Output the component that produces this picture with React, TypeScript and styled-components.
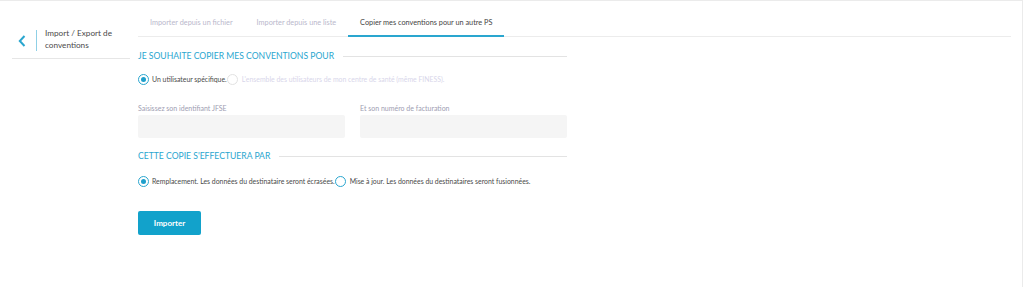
import { FC } from 'react'
import styled, { createGlobalStyle } from 'styled-components'

const GlobalStyle = createGlobalStyle`
  html, body {
    margin: 0;
    padding: 0;
    background: #fff;
  }
  body {
    font-family: Lato, 'Open Sans', sans-serif;
    color: #555;
  }
`

const Page = styled.div`
  display: flex;
  height: 286px;
  width: 1022px;
  border-top: 1px solid #ebebeb;
  border-right: 1px solid #ebebeb;
`

const Sidebar = styled.aside`
  width: 118px;
  margin-left: 12px;
  flex-shrink: 0;
`

const SideHeader = styled.div`
  display: flex;
  align-items: center;
  box-sizing: border-box;
  height: 58px;
  padding-top: 19px;
  border-bottom: 1px solid #e6e6e6;
`

const Back = styled.div`
  width: 20px;
  display: flex;
  justify-content: center;
  padding-top: 3px;
`

const VLine = styled.div`
  width: 1px;
  height: 21px;
  background: #8fd0e6;
  margin: 2px 8px 0 4px;
`

const SideTitle = styled.div`
  font-size: 8.2px;
  line-height: 12px;
  color: #4a4a4a;
`

const Main = styled.main`
  flex: 1;
  padding: 0 11px 0 8px;
`

const Tabs = styled.nav`
  display: flex;
  height: 35px;
  border-bottom: 1px solid #ececec;
`

const Tab = styled.div<{ $active?: boolean }>`
  padding: 17px 12px 0;
  font-size: 7.3px;
  color: ${p => (p.$active ? '#444' : '#b9b8cc')};
  border-bottom: 2px solid ${p => (p.$active ? '#2aa6cf' : 'transparent')};
  margin-bottom: -1px;
`

const Form = styled.section`
  width: 429px;
`

const SectionTitle = styled.div<{ $top: number }>`
  display: flex;
  align-items: center;
  gap: 9px;
  height: 12px;
  margin-top: ${p => p.$top}px;
  font-size: 8.6px;
  color: #2aa6cf;
  text-transform: uppercase;
  &::after {
    content: '';
    flex: 1;
    height: 1px;
    background: #e3e3e3;
  }
`

const RadioRow = styled.div<{ $top: number }>`
  display: flex;
  align-items: center;
  height: 12px;
  margin-top: ${p => p.$top}px;
  font-size: 6.9px;
  white-space: nowrap;
`

const RadioOption = styled.label<{ $disabled?: boolean }>`
  display: flex;
  align-items: center;
  color: ${p => (p.$disabled ? '#d8d6ea' : '#4a4a4a')};
`

const RadioCircle = styled.span<{ $checked?: boolean; $disabled?: boolean }>`
  box-sizing: border-box;
  width: 11px;
  height: 11px;
  border-radius: 50%;
  border: 1px solid ${p => (p.$disabled ? '#e2e2e2' : '#2aa6cf')};
  margin-right: ${p => (p.$checked ? 3 : 4)}px;
  display: flex;
  align-items: center;
  justify-content: center;
  background: #fff;
  &::after {
    content: '';
    width: 5px;
    height: 5px;
    border-radius: 50%;
    background: ${p => (p.$checked ? '#1f9fcb' : 'transparent')};
  }
`

const Fields = styled.div`
  display: grid;
  grid-template-columns: 207px 207px;
  column-gap: 15px;
  margin-top: 18px;
`

const Field = styled.div`
  display: flex;
  flex-direction: column;
`

const Label = styled.div`
  font-size: 7px;
  line-height: 10px;
  color: #9e9db2;
`

const Input = styled.input`
  box-sizing: border-box;
  height: 23px;
  border: none;
  border-radius: 2px;
  background: #f5f5f5;
  margin-top: 2px;
`

const Button = styled.button`
  display: block;
  margin-top: 24px;
  width: 63px;
  height: 24px;
  border: none;
  border-radius: 2px;
  background: #12a2cb;
  color: #fff;
  font-family: Lato, sans-serif;
  font-weight: 700;
  font-size: 8px;
  padding: 0;
`

const App: FC = () => (
  <>
    <GlobalStyle />
    <Page>
      <Sidebar>
        <SideHeader>
          <Back>
            <svg width="8" height="12" viewBox="0 0 8 12">
              <path d="M6.5 1 L1.8 6 L6.5 11" fill="none" stroke="#2aa6cf" strokeWidth="2" />
            </svg>
          </Back>
          <VLine />
          <SideTitle>
            Import / Export de
            <br />
            conventions
          </SideTitle>
        </SideHeader>
      </Sidebar>
      <Main>
        <Tabs>
          <Tab>Importer depuis un fichier</Tab>
          <Tab>Importer depuis une liste</Tab>
          <Tab $active>Copier mes conventions pour un autre PS</Tab>
        </Tabs>
        <Form>
          <SectionTitle $top={13}>Je souhaite copier mes conventions pour</SectionTitle>
          <RadioRow $top={11}>
            <RadioOption>
              <RadioCircle $checked />
              Un utilisateur spécifique.
            </RadioOption>
            <RadioOption $disabled>
              <RadioCircle $disabled />
              L'ensemble des utilisateurs de mon centre de santé (même FINESS).
            </RadioOption>
          </RadioRow>
          <Fields>
            <Field>
              <Label>Saisissez son identifiant JFSE</Label>
              <Input />
            </Field>
            <Field>
              <Label>Et son numéro de facturation</Label>
              <Input />
            </Field>
          </Fields>
          <SectionTitle $top={12}>Cette copie s'effectuera par</SectionTitle>
          <RadioRow $top={13}>
            <RadioOption>
              <RadioCircle $checked />
              Remplacement. Les données du destinataire seront écrasées.
            </RadioOption>
            <RadioOption>
              <RadioCircle />
              Mise à jour. Les données du destinataires seront fusionnées.
            </RadioOption>
          </RadioRow>
          <Button>Importer</Button>
        </Form>
      </Main>
    </Page>
  </>
)

export default App
